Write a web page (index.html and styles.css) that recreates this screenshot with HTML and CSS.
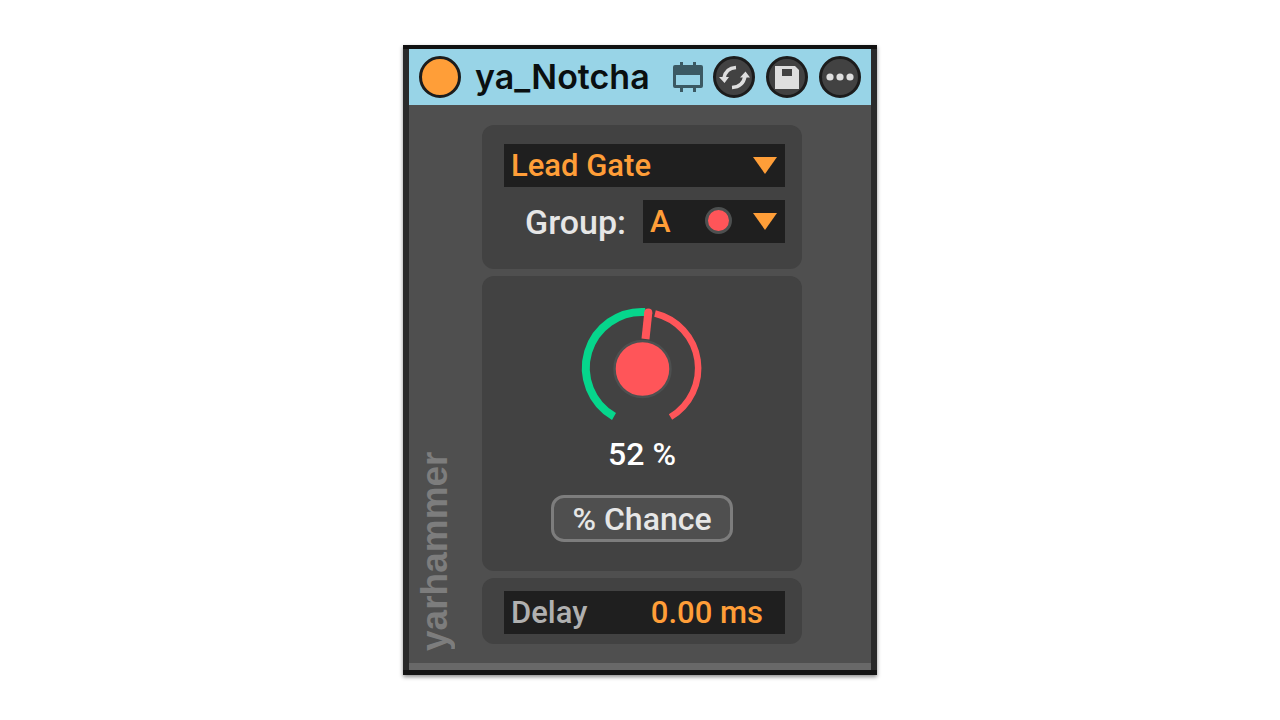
FILE: index.html
```html
<!DOCTYPE html>
<html lang="en">
<head>
    <meta charset="UTF-8">
    <meta name="viewport" content="width=device-width, initial-scale=1.0">
    <title>ya_Notcha</title>
    <link rel="stylesheet" href="styles.css">
</head>
<body>
    <main class="device">
        <div class="device-inner">
            <header class="title-bar">
                <button class="power-btn" type="button" aria-label="Device on" aria-pressed="true"></button>
                <h1>ya_Notcha</h1>
                <svg class="window-icon" viewBox="0 0 30 30" aria-hidden="true">
                    <path fill="#3b5963" fill-rule="evenodd" d="M2 3H7V0H10V3H20V0H23V3H28Q30 3 30 5V24Q30 26 28 26H23V30H20V26H10V30H7V26H2Q0 26 0 24V5Q0 3 2 3ZM3 13V23H27V13Z"/>
                </svg>
                <div class="title-btns">
                    <button class="round-btn" type="button" aria-label="Hot-swap">
                        <svg viewBox="0 0 42 42">
                            <g fill="none" stroke="#dedede" stroke-width="3.6">
                                <path d="M23 11.5C16 12 12 16 11 22"/>
                                <path d="M19 31.5C27 31 31 26 32 20"/>
                            </g>
                            <path fill="#dedede" d="M6 21L16 21L11.5 27ZM27 21.5L37 21.5L32.5 15.5Z"/>
                        </svg>
                    </button>
                    <button class="round-btn" type="button" aria-label="Save preset">
                        <svg viewBox="0 0 42 42">
                            <path fill="#dedede" fill-rule="evenodd" d="M9 10H29L33 14V33H9ZM16 13V20H26V13Z"/>
                        </svg>
                    </button>
                    <button class="round-btn" type="button" aria-label="More options">
                        <svg viewBox="0 0 42 42">
                            <g fill="#dedede">
                                <circle cx="11" cy="21" r="3.6"/>
                                <circle cx="21" cy="21" r="3.6"/>
                                <circle cx="31" cy="21" r="3.6"/>
                            </g>
                        </svg>
                    </button>
                </div>
            </header>

            <div class="device-body">
                <div class="brand">yarhammer</div>

                <div class="panels">
                    <section class="panel gate-panel">
                        <div class="select-box">
                            <select aria-label="Mode">
                                <option>Lead Gate</option>
                            </select>
                            <span class="arrow"></span>
                        </div>
                        <div class="group-row">
                            <label for="group">Group:</label>
                            <div class="select-box">
                                <select id="group">
                                    <option>A</option>
                                </select>
                                <span class="led"></span>
                                <span class="arrow"></span>
                            </div>
                        </div>
                    </section>

                    <section class="panel chance-panel">
                        <div class="knob">
                            <svg viewBox="0 0 120 120" aria-hidden="true">
                                <path d="M32 108.5A56 56 0 0 1 63 4" fill="none" stroke="#06d68c" stroke-width="8"/>
                                <path d="M73 5.5A56.5 56.5 0 0 1 88.5 109" fill="none" stroke="#ff5559" stroke-width="6.5"/>
                                <path d="M63.5 31L66.3 4.5" stroke="#ff5559" stroke-width="8"/>
                                <circle cx="66.3" cy="4.5" r="4" fill="#ff5559"/>
                                <circle cx="60.5" cy="61" r="28" fill="#ff5559" stroke="#4d5050" stroke-width="2.5"/>
                            </svg>
                            <input type="range" id="chance" min="0" max="100" value="52" aria-label="Chance">
                        </div>
                        <output class="knob-value" for="chance">52 %</output>
                        <button class="chance-btn" type="button">% Chance</button>
                    </section>

                    <section class="panel delay-panel">
                        <div class="delay-box">
                            <label for="delay">Delay</label>
                            <input type="text" id="delay" value="0.00 ms">
                        </div>
                    </section>
                </div>
            </div>
        </div>
    </main>

    <script>
        document.getElementById('chance').addEventListener('input', function() {
            document.querySelector('.knob-value').textContent = this.value + ' %';
        });
    </script>
</body>
</html>
```
FILE: styles.css
```css
* {
    margin: 0;
    padding: 0;
    box-sizing: border-box;
}

body {
    min-height: 100vh;
    display: flex;
    justify-content: center;
    align-items: center;
    background: #fff;
    font-family: Roboto, "Liberation Sans", sans-serif;
    font-size: 32px;
    line-height: 40px;
}

button,
select,
input {
    font: inherit;
    border: none;
    border-radius: 0;
}

button,
select {
    cursor: pointer;
}

.device {
    width: 100%;
    max-width: 474px;
    border-top: 4px solid #111;
    border-bottom: 5px solid #131313;
    box-shadow: 0 2px 4px rgba(0, 0, 0, 0.45);
}

.device-inner {
    border: solid #2a2a2a;
    border-width: 0 6px;
    background: #4f4f4f;
}

/* title bar */
.title-bar {
    display: flex;
    align-items: center;
    height: 56px;
    padding: 0 10px;
    background: #98d4e7;
}

.power-btn,
.round-btn {
    flex: none;
    width: 42px;
    height: 42px;
    border: 3px solid #1c1c1c;
    border-radius: 50%;
}

.power-btn {
    background: #ff9e38;
}

.round-btn {
    background: #424242;
}

.round-btn svg {
    display: block;
    width: 42px;
    height: 42px;
    margin: -3px;
}

h1 {
    flex: 1;
    margin-left: 14px;
    font-family: Inter, sans-serif;
    font-size: 34px;
    font-weight: 600;
    color: #0a0f10;
}

.window-icon {
    width: 30px;
    height: 30px;
    margin-right: 10px;
}

.title-btns {
    display: flex;
    gap: 11px;
}

/* body */
.device-body {
    display: flex;
    padding-right: 69px;
    border-bottom: 7px solid #686868;
}

/* turned round so that the name reads upwards */
.brand {
    flex: none;
    width: 73px;
    padding: 12px 6px 0 0;
    writing-mode: vertical-rl;
    transform: rotate(180deg);
    font-family: "Liberation Sans", sans-serif;
    font-size: 37px;
    font-weight: bold;
    color: #7d7d7d;
}

.panels {
    flex: 1;
    min-width: 0;
    display: flex;
    flex-direction: column;
    gap: 7px;
    padding: 20px 0 19px;
}

.panel {
    border-radius: 12px;
    background: #424242;
}

.gate-panel {
    display: flex;
    flex-direction: column;
    gap: 13px;
    padding: 19px 17px 26px 22px;
}

.select-box {
    position: relative;
    flex: 1;
}

.select-box select {
    display: block;
    width: 100%;
    height: 43px;
    padding: 0 7px;
    appearance: none;
    background: #1f1f1f;
    color: #ff9e38;
    font-size: 31px;
    font-weight: 500;
}

.arrow {
    position: absolute;
    top: 13px;
    right: 8px;
    border: solid transparent;
    border-width: 17px 12px 0;
    border-top-color: #ff9e38;
    pointer-events: none;
}

.led {
    position: absolute;
    top: 7px;
    right: 53px;
    width: 27px;
    height: 27px;
    border: 3px solid #4d5050;
    border-radius: 50%;
    background: #ff5559;
    pointer-events: none;
}

.group-row {
    display: flex;
    align-items: center;
    gap: 17px;
    padding-left: 21px;
    color: #e6e6e6;
    font-size: 34px;
    font-weight: 500;
}

.chance-panel {
    display: flex;
    flex-direction: column;
    align-items: center;
    padding: 32px 0 29px;
}

.knob {
    position: relative;
    width: 120px;
    height: 120px;
}

.knob svg {
    display: block;
    width: 100%;
    height: 100%;
    overflow: visible;
}

.knob input {
    position: absolute;
    inset: 0;
    width: 100%;
    height: 100%;
    opacity: 0;
    cursor: ns-resize;
}

.knob-value {
    margin: 6px 0 21px;
    color: #fff;
    font-weight: 500;
}

.chance-btn {
    width: 182px;
    height: 47px;
    border: 3px solid #7d7d7d;
    border-radius: 13px;
    background: #4f4f4f;
    color: #e6e6e6;
    font-weight: 500;
}

.delay-panel {
    padding: 13px 17px 10px 22px;
}

.delay-box {
    display: flex;
    align-items: center;
    height: 43px;
    padding: 0 22px 0 7px;
    background: #1f1f1f;
    color: #b0b0b0;
    font-size: 31px;
    font-weight: 500;
}

.delay-box input {
    flex: 1;
    min-width: 0;
    background: none;
    color: #ff9e38;
    text-align: right;
}
```
